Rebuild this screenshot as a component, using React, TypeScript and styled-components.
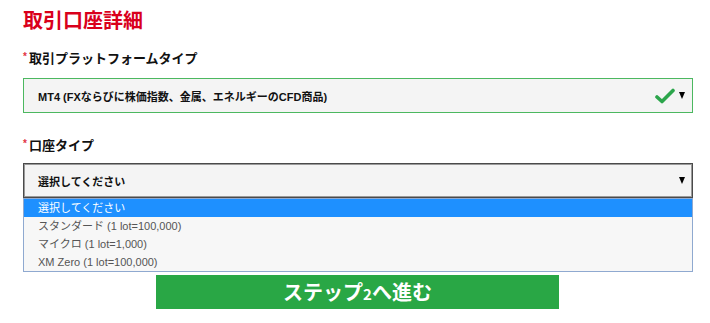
import styled, { createGlobalStyle } from "styled-components";

const GlobalStyle = createGlobalStyle`
  html, body {
    margin: 0;
    padding: 0;
    background: #ffffff;
  }
  body {
    font-family: "Liberation Sans", "Noto Sans CJK JP", sans-serif;
    color: #111;
  }
`;

const Page = styled.div`
  width: 670px;
  padding: 9px 0 0 23px;
  display: flex;
  flex-direction: column;
`;

const Title = styled.h1`
  margin: 0;
  font-size: 20px;
  line-height: 24px;
  font-weight: 700;
  color: #d9001b;
`;

const Label = styled.div<{ $top: number }>`
  margin-top: ${(p) => p.$top}px;
  font-size: 13px;
  line-height: 18px;
  font-weight: 700;
  color: #111;
  display: flex;
  align-items: flex-start;
`;

const Star = styled.span`
  color: #e2333f;
  font-size: 10px;
  line-height: 14px;
  margin-right: 2px;
`;

const SelectBox = styled.div<{ $valid?: boolean }>`
  margin-top: ${(p) => (p.$valid ? 10 : 8)}px;
  height: 35px;
  box-sizing: border-box;
  display: flex;
  align-items: center;
  padding: 0 7px 0 14px;
  background: #f4f4f4;
  border: ${(p) => (p.$valid ? "1px solid #4cb860" : "1px solid #4a4a4a")};
  box-shadow: ${(p) => (p.$valid ? "none" : "inset 0 0 0 1px #9a9a9a")};
`;

const SelectText = styled.span`
  flex: 1;
  font-size: 11px;
  font-weight: 700;
  color: #111;
`;

const Icons = styled.span`
  display: flex;
  align-items: center;
  gap: 4px;
`;

const Arrow = styled.span`
  width: 0;
  height: 0;
  border-left: 3.5px solid transparent;
  border-right: 3.5px solid transparent;
  border-top: 7px solid #000;
`;

const List = styled.div`
  box-sizing: border-box;
  border: 1px solid #8fa9d0;
  background: #f7f7f7;
  display: flex;
  flex-direction: column;
`;

const Option = styled.div<{ $active?: boolean }>`
  height: 18px;
  line-height: 18px;
  padding-left: 14px;
  font-size: 11px;
  color: ${(p) => (p.$active ? "#fff" : "#555")};
  background: ${(p) => (p.$active ? "#1e90ff" : "transparent")};
`;

const ButtonRow = styled.div`
  margin-top: 3px;
  display: flex;
  padding-left: 133px;
`;

const NextButton = styled.button`
  width: 403px;
  height: 34px;
  border: none;
  background: #29a745;
  color: #fff;
  font-family: "Noto Sans CJK JP", sans-serif;
  font-size: 20px;
  font-weight: 700;
  line-height: 34px;
  padding: 0;
  cursor: pointer;
`;

const Small = styled.span`
  font-size: 15px;
`;

const Check = () => (
  <svg width="20" height="16" viewBox="0 0 20 16">
    <path
      d="M2 9 L7 13.5 L18 2.5"
      fill="none"
      stroke="#2ba54b"
      strokeWidth="3.6"
      strokeLinecap="round"
      strokeLinejoin="round"
    />
  </svg>
);

const options = [
  "選択してください",
  "スタンダード (1 lot=100,000)",
  "マイクロ (1 lot=1,000)",
  "XM Zero (1 lot=100,000)",
];

export default function App() {
  return (
    <>
      <GlobalStyle />
      <Page>
        <Title>取引口座詳細</Title>

        <Label $top={17}>
          <Star>*</Star>取引プラットフォームタイプ
        </Label>
        <SelectBox $valid>
          <SelectText>MT4 (FXならびに株価指数、金属、エネルギーのCFD商品)</SelectText>
          <Icons>
            <Check />
            <Arrow />
          </Icons>
        </SelectBox>

        <Label $top={24}>
          <Star>*</Star>口座タイプ
        </Label>
        <SelectBox>
          <SelectText>選択してください</SelectText>
          <Icons>
            <Arrow />
          </Icons>
        </SelectBox>
        <List>
          {options.map((o, i) => (
            <Option key={o} $active={i === 0}>
              {o}
            </Option>
          ))}
        </List>

        <ButtonRow>
          <NextButton>
            ステップ<Small>2</Small>へ進む
          </NextButton>
        </ButtonRow>
      </Page>
    </>
  );
}
